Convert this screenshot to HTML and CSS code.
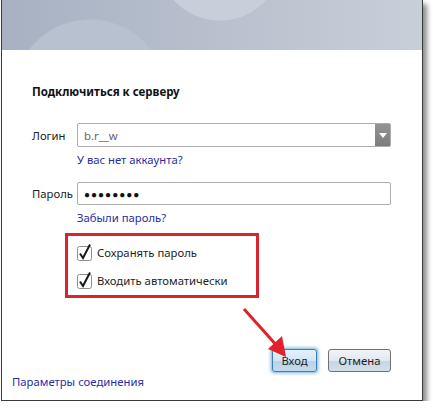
FILE: index.html
```html
<!DOCTYPE html>
<html lang="ru">
<head>
    <meta charset="UTF-8">
    <title>Подключиться к серверу</title>
    <link rel="stylesheet" href="styles.css">
</head>
<body>

<div class="window">
    <div class="banner"></div> <!-- шапка окна с кругами -->

    <div class="content">
        <h1>Подключиться к серверу</h1>

        <div class="form">
            <label class="label" for="login">Логин</label>
            <div class="combo">
                <input type="text" id="login" value="b.r__w">
                <span class="combo-btn"></span>
            </div>
            <span></span>
            <a class="link" href="#">У вас нет аккаунта?</a>

            <label class="label" for="pass">Пароль</label>
            <input type="text" id="pass" class="pass" value="●●●●●●●●">
            <span></span>
            <a class="link" href="#">Забыли пароль?</a>
        </div>

        <div class="options">
            <label class="check">
                <svg width="16" height="17" viewBox="0 0 16 17">
                    <rect x="0.5" y="2.5" width="14" height="14" rx="2" fill="#fff" stroke="#8e8f8f"/>
                    <path d="M3 9.5 L6 14 L13 0.5" fill="none" stroke="#1a1a1a" stroke-width="2"/>
                </svg>
                Сохранять пароль
            </label>
            <label class="check">
                <svg width="16" height="17" viewBox="0 0 16 17">
                    <rect x="0.5" y="2.5" width="14" height="14" rx="2" fill="#fff" stroke="#8e8f8f"/>
                    <path d="M3 9.5 L6 14 L13 0.5" fill="none" stroke="#1a1a1a" stroke-width="2"/>
                </svg>
                Входить автоматически
            </label>
        </div>

        <div class="buttons">
            <button class="btn btn-default">Вход</button>
            <button class="btn btn-cancel">Отмена</button>
        </div>
    </div>

    <a class="link footer-link" href="#">Параметры соединения</a>

    <!-- стрелка-подсказка на кнопку входа -->
    <svg class="arrow" width="60" height="60" viewBox="0 0 60 60">
        <line x1="2" y1="2" x2="36" y2="40" stroke="#e0222b" stroke-width="3"/>
        <polygon points="44,50 26,42 40,29" fill="#e0222b"/>
    </svg>
</div>

</body>
</html>
```

FILE: styles.css
```css
/* Общие настройки */
body {
    margin: 0;
    padding: 0;
    background-color: #fff;
    font-family: 'Noto Sans', 'Open Sans', sans-serif;
    font-size: 11.3px;
    color: #1e1e1e;
}

/* Окно диалога */
.window {
    position: relative;
    width: 420px;
    height: 400px;
    margin-left: 1px;
    border: 1px solid #3a3a3a;
    border-top: none;
    background-color: #fff;
    box-shadow: 4px 4px 5px rgba(0, 0, 0, 0.45);
    display: flex;
    flex-direction: column;
}

/* Шапка с мягкими кругами */
.banner {
    height: 50px;
    background:
        radial-gradient(circle at 218px -42px, #c9cfda 62px, rgba(201, 207, 218, 0) 63px),
        radial-gradient(circle at 88px 96px, #b8c1cf 76px, rgba(184, 193, 207, 0) 77px),
        linear-gradient(to right, #a7b1c2, #c9cfd9);
}

.content {
    padding: 0 30px 0 30px;
    flex: 1;
}

h1 {
    font-size: 11.5px;
    font-weight: bold;
    margin: 34px 0 0 0;
    line-height: 16px;
    color: #111;
}

/* Поля логина и пароля */
.form {
    display: grid;
    grid-template-columns: 45px 314px;
    align-items: center;
    margin-top: 23px;
}

.label {
    color: #222;
}

.combo {
    position: relative;
    height: 24px;
}

input {
    box-sizing: border-box;
    width: 314px;
    height: 24px;
    border: 1px solid #abadb3;
    border-radius: 2px;
    padding: 0 6px;
    font-family: inherit;
    font-size: 11.3px;
    color: #666;
    outline: none;
}

.combo-btn {
    position: absolute;
    right: 1px;
    top: 1px;
    width: 15px;
    height: 22px;
    background: linear-gradient(#949494, #7c7c7c);
}

.combo-btn::after {
    content: '';
    position: absolute;
    left: 4px;
    top: 9px;
    border-left: 4px solid transparent;
    border-right: 4px solid transparent;
    border-top: 5px solid #fff;
}

.pass {
    height: 23px;
    margin-top: 14px;
    color: #111;
    font-size: 10px;
    letter-spacing: 1px;
}

.form .label:nth-of-type(2) {
    margin-top: 14px;
}

.link {
    color: #2c2ca2;
    text-decoration: none;
    line-height: 16px;
    margin-top: 5px;
}

/* Флажки в красной рамке */
.options {
    width: 179px;
    margin: 7px 0 0 33px;
    border: 3px solid #d9232f;
    padding: 8px 0 6px 9px;
    display: flex;
    flex-direction: column;
    gap: 11px;
}

.check {
    display: flex;
    align-items: flex-end;
    gap: 4px;
    line-height: 16px;
}

.check svg {
    flex: none;
}

/* Кнопки */
.buttons {
    display: flex;
    justify-content: flex-end;
    align-items: center;
    gap: 11px;
    margin: 51px 0 0 0;
    padding-right: 1px;
}

.btn {
    height: 23px;
    padding: 0;
    border: 1px solid #707070;
    border-radius: 3px;
    background: linear-gradient(#f0f3f8 0%, #e2e8f1 50%, #c9d5e4 51%, #d4deea 100%);
    font-family: inherit;
    font-size: 11.3px;
    color: #1e1e1e;
}

.btn-default {
    width: 45px;
    border-color: #3c7fb1;
    box-shadow: 0 0 0 1px #a6cde9, 0 0 3px 2px rgba(120, 175, 220, 0.6);
    background: linear-gradient(#e5f1fb 0%, #d3e6f6 50%, #b9d2ea 51%, #c4dbef 100%);
}

.btn-cancel {
    width: 63px;
}

.footer-link {
    margin: 0 0 10px 10px;
}

.arrow {
    position: absolute;
    left: 240px;
    top: 307px;
}
```
